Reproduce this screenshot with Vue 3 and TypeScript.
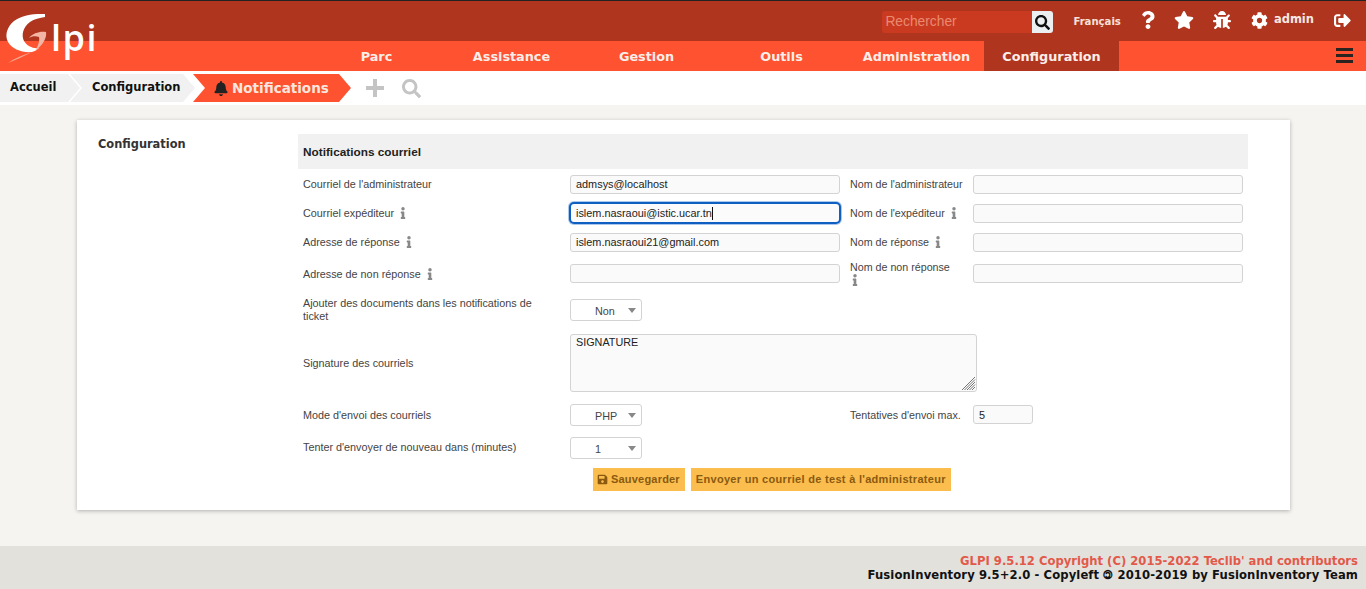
<script setup lang="ts">
const menu = [
  { label: 'Parc' },
  { label: 'Assistance' },
  { label: 'Gestion' },
  { label: 'Outils' },
  { label: 'Administration' },
  { label: 'Configuration', active: true },
]
</script>

<template>
  <div class="page">
    <header class="top">
      <div class="top-right">
        <div class="search">
          <span class="search-input">Rechercher</span>
          <span class="search-btn">
            <svg width="15" height="15" viewBox="0 0 512 512"><path fill="#111" d="M505 442.700L405.300 343c-4.500-4.500-10.600-7-17-7H372c27.600-35.300 44-79.700 44-128C416 93.100 322.900 0 208 0S0 93.100 0 208s93.100 208 208 208c48.300 0 92.700-16.400 128-44v16.300c0 6.400 2.500 12.500 7 17l99.700 99.700c9.400 9.400 24.600 9.400 33.900 0l28.300-28.300c9.400-9.400 9.400-24.600.1-34zM208 336c-70.700 0-128-57.200-128-128 0-70.700 57.200-128 128-128 70.700 0 128 57.200 128 128 0 70.700-57.200 128-128 128z"/></svg>
          </span>
        </div>
        <span class="lang">Français</span>
        <svg class="ico help" width="14" height="18" viewBox="0 0 384 512"><path fill="#fff" d="M202.021 0C122.202 0 70.503 32.703 29.914 91.026c-7.363 10.580-5.093 25.086 5.178 32.874l43.138 32.709c10.373 7.865 25.132 6.026 33.253-4.148 25.049-31.381 43.630-49.449 82.757-49.449 30.764 0 68.816 19.799 68.816 49.631 0 22.552-18.617 34.134-48.993 51.164-35.423 19.860-82.299 44.576-82.299 106.405V320c0 13.255 10.745 24 24 24h72.471c13.255 0 24-10.745 24-24v-5.773c0-42.860 125.268-44.645 125.268-160.627C377.504 66.256 286.902 0 202.021 0zM192 373.459c-38.196 0-69.271 31.075-69.271 69.271 0 38.195 31.075 69.270 69.271 69.270s69.271-31.075 69.271-69.271-31.075-69.270-69.271-69.270z"/></svg>
        <svg class="ico star" width="20" height="18" viewBox="0 0 576 512"><path fill="#fff" d="M259.300 17.800L194 150.200 47.900 171.500c-26.200 3.800-36.700 36.100-17.700 54.600l105.700 103-25 145.500c-4.500 26.300 23.200 46 46.400 33.700L288 439.600l130.700 68.700c23.200 12.200 50.900-7.400 46.400-33.700l-25-145.500 105.700-103c19-18.500 8.500-50.800-17.700-54.600L382 150.200 316.700 17.800c-11.700-23.600-45.600-23.900-57.400 0z"/></svg>
        <svg class="ico bug" width="18" height="18" viewBox="0 0 512 512"><path fill="#fff" d="M511.988 288.900c-.478 17.430-15.217 31.100-32.653 31.100H424v16c0 21.864-4.882 42.584-13.600 61.145l60.228 60.228c12.496 12.497 12.496 32.758 0 45.255-12.498 12.497-32.759 12.496-45.256 0l-54.736-54.736C345.886 467.965 314.351 480 280 480V236c0-6.627-5.373-12-12-12h-24c-6.627 0-12 5.373-12 12v244c-34.351 0-65.886-12.035-90.636-32.108l-54.736 54.736c-12.498 12.497-32.759 12.496-45.256 0-12.496-12.497-12.496-32.758 0-45.255l60.228-60.228C92.882 378.584 88 357.864 88 336v-16H32.666C15.230 320 .491 306.330.013 288.900-.484 270.816 14.028 256 32 256h56v-58.745l-46.628-46.628c-12.496-12.497-12.496-32.758 0-45.255 12.498-12.497 32.758-12.497 45.256 0L141.255 160h229.489l54.627-54.627c12.498-12.497 32.758-12.497 45.256 0 12.496 12.497 12.496 32.758 0 45.255L424 197.255V256h56c17.972 0 32.484 14.816 31.988 32.900zM257 0c-61.856 0-112 50.144-112 112h224C369 50.144 318.856 0 257 0z"/></svg>
        <svg class="ico gear" width="17" height="17" viewBox="0 0 512 512"><path fill="#fff" d="M487.400 315.700l-42.600-24.600c4.300-23.200 4.300-47 0-70.200l42.600-24.600c4.900-2.800 7.100-8.600 5.500-14-11.100-35.600-30-67.800-54.700-94.600-3.800-4.100-10-5.100-14.800-2.300L380.800 110c-17.900-15.400-38.500-27.300-60.800-35.100V25.800c0-5.600-3.900-10.500-9.400-11.700-36.700-8.200-74.300-7.800-109.200 0-5.500 1.200-9.400 6.100-9.400 11.700V75c-22.200 7.900-42.800 19.800-60.800 35.100L88.700 85.500c-4.900-2.800-11-1.900-14.800 2.300-24.700 26.700-43.600 58.900-54.700 94.600-1.700 5.400.6 11.200 5.500 14L67.300 221c-4.300 23.200-4.300 47 0 70.200l-42.600 24.600c-4.900 2.800-7.100 8.600-5.500 14 11.100 35.600 30 67.800 54.700 94.600 3.800 4.100 10 5.100 14.800 2.300l42.600-24.600c17.900 15.400 38.500 27.300 60.800 35.100v49.200c0 5.600 3.900 10.500 9.400 11.700 36.700 8.200 74.300 7.800 109.200 0 5.500-1.200 9.400-6.100 9.400-11.700v-49.200c22.200-7.900 42.800-19.800 60.800-35.100l42.600 24.600c4.900 2.800 11 1.900 14.800-2.300 24.700-26.700 43.600-58.900 54.700-94.600 1.500-5.500-.7-11.300-5.600-14.100zM256 336c-44.100 0-80-35.900-80-80s35.900-80 80-80 80 35.900 80 80-35.900 80-80 80z"/></svg>
        <span class="user">admin</span>
        <svg class="ico out" width="19" height="17" viewBox="0 0 512 512"><path fill="#fff" d="M497 273L329 441c-15 15-41 4.500-41-17v-96H152c-13.300 0-24-10.700-24-24v-96c0-13.300 10.700-24 24-24h136V88c0-21.400 25.900-32 41-17l168 168c9.300 9.400 9.300 24.600 0 34zM192 436v-40c0-6.600-5.400-12-12-12H96c-17.700 0-32-14.300-32-32V160c0-17.700 14.300-32 32-32h84c6.600 0 12-5.400 12-12V76c0-6.600-5.400-12-12-12H96c-53 0-96 43-96 96v192c0 53 43 96 96 96h84c6.600 0 12-5.400 12-12z"/></svg>
      </div>
    </header>

    <nav class="menu">
      <a v-for="m in menu" :key="m.label" class="menu-item" :class="{ active: m.active }">{{ m.label }}</a>
      <span class="burger"><i></i><i></i><i></i></span>
    </nav>

    <div class="logo">
      <svg class="logo-g" width="56" height="65" viewBox="0 0 56 65">
        <path fill="#fff" d="M45 14 C34 13.500 22 15 14 21 C7 27 4.500 35 8 42 C12 49 22 53 32 52 C35 51 37 50 39 48 C33 49 27 46 24 41 C21 35 23 27 30 22 C34 19 40 18 45 17Z" />
        <path fill="#f3b6a4" d="M29 38 C33 33 40 31 46 32 C47 38 43 45 35 51 C38 46 40 41 39 37 C36 36 32 36 29 38Z" />
        <path fill="#f6a78f" d="M8 63 C15 58 23 55 32 52 C24 56 16 60 8 63Z" />
      </svg>
      <span class="logo-text">lpi</span>
    </div>

    <div class="crumbs">
      <span class="crumb first">Accueil</span>
      <span class="crumb second">Configuration</span>
      <span class="crumb current">
        <svg width="14" height="15" viewBox="0 0 448 512"><path fill="#222" d="M224 512c35.320 0 63.970-28.650 63.970-64H160.030c0 35.350 28.650 64 63.970 64zm215.390-149.710c-19.320-20.760-55.470-51.990-55.470-154.290 0-77.700-54.480-139.900-127.940-155.160V32c0-17.670-14.320-32-31.980-32s-31.980 14.330-31.980 32v20.840C118.560 68.100 64.080 130.300 64.080 208c0 102.300-36.150 133.530-55.470 154.290-6 6.450-8.660 14.160-8.610 21.710.11 16.400 12.980 32 32.100 32h383.800c19.120 0 32-15.600 32.100-32 .05-7.550-2.610-15.270-8.610-21.710z"/></svg>
        Notifications
      </span>
      <svg class="act-plus" width="18" height="18" viewBox="0 0 18 18"><path fill="#c4c4c4" d="M7 0h4v7h7v4h-7v7H7v-7H0V7h7z"/></svg>
      <svg class="act-search" width="19" height="19" viewBox="0 0 512 512"><path fill="#c4c4c4" d="M505 442.700L405.300 343c-4.500-4.500-10.600-7-17-7H372c27.600-35.300 44-79.700 44-128C416 93.100 322.900 0 208 0S0 93.100 0 208s93.100 208 208 208c48.300 0 92.700-16.400 128-44v16.300c0 6.400 2.500 12.500 7 17l99.700 99.700c9.400 9.400 24.600 9.400 33.900 0l28.300-28.300c9.400-9.400 9.400-24.600.1-34zM208 336c-70.700 0-128-57.200-128-128 0-70.700 57.200-128 128-128 70.700 0 128 57.200 128 128 0 70.700-57.200 128-128 128z"/></svg>
    </div>

    <main class="body">
      <section class="card">
        <div class="tab">Configuration</div>
        <div class="panel">
          <div class="panel-head">Notifications courriel</div>
          <div class="form">
            <label>Courriel de l'administrateur</label>
            <div class="field"><input value="admsys@localhost" /></div>
            <label class="l2">Nom de l'administrateur</label>
            <div class="field"><input /></div>

            <label>Courriel expéditeur <svg class="info" width="6" height="12" viewBox="0 0 192 512"><path d="M20 424.229h20V279.771H20c-11.046 0-20-8.954-20-20V212c0-11.046 8.954-20 20-20h112c11.046 0 20 8.954 20 20v212.229h20c11.046 0 20 8.954 20 20V492c0 11.046-8.954 20-20 20H20c-11.046 0-20-8.954-20-20v-47.771c0-11.046 8.954-20 20-20zM96 0C56.235 0 24 32.235 24 72s32.235 72 72 72 72-32.235 72-72S135.764 0 96 0z"/></svg></label>
            <div class="field"><div class="input-focus">islem.nasraoui@istic.ucar.tn<b class="caret"></b></div></div>
            <label class="l2">Nom de l'expéditeur <svg class="info" width="6" height="12" viewBox="0 0 192 512"><path d="M20 424.229h20V279.771H20c-11.046 0-20-8.954-20-20V212c0-11.046 8.954-20 20-20h112c11.046 0 20 8.954 20 20v212.229h20c11.046 0 20 8.954 20 20V492c0 11.046-8.954 20-20 20H20c-11.046 0-20-8.954-20-20v-47.771c0-11.046 8.954-20 20-20zM96 0C56.235 0 24 32.235 24 72s32.235 72 72 72 72-32.235 72-72S135.764 0 96 0z"/></svg></label>
            <div class="field"><input /></div>

            <label>Adresse de réponse <svg class="info" width="6" height="12" viewBox="0 0 192 512"><path d="M20 424.229h20V279.771H20c-11.046 0-20-8.954-20-20V212c0-11.046 8.954-20 20-20h112c11.046 0 20 8.954 20 20v212.229h20c11.046 0 20 8.954 20 20V492c0 11.046-8.954 20-20 20H20c-11.046 0-20-8.954-20-20v-47.771c0-11.046 8.954-20 20-20zM96 0C56.235 0 24 32.235 24 72s32.235 72 72 72 72-32.235 72-72S135.764 0 96 0z"/></svg></label>
            <div class="field"><input value="islem.nasraoui21@gmail.com" /></div>
            <label class="l2">Nom de réponse <svg class="info" width="6" height="12" viewBox="0 0 192 512"><path d="M20 424.229h20V279.771H20c-11.046 0-20-8.954-20-20V212c0-11.046 8.954-20 20-20h112c11.046 0 20 8.954 20 20v212.229h20c11.046 0 20 8.954 20 20V492c0 11.046-8.954 20-20 20H20c-11.046 0-20-8.954-20-20v-47.771c0-11.046 8.954-20 20-20zM96 0C56.235 0 24 32.235 24 72s32.235 72 72 72 72-32.235 72-72S135.764 0 96 0z"/></svg></label>
            <div class="field"><input /></div>

            <label>Adresse de non réponse <svg class="info" width="6" height="12" viewBox="0 0 192 512"><path d="M20 424.229h20V279.771H20c-11.046 0-20-8.954-20-20V212c0-11.046 8.954-20 20-20h112c11.046 0 20 8.954 20 20v212.229h20c11.046 0 20 8.954 20 20V492c0 11.046-8.954 20-20 20H20c-11.046 0-20-8.954-20-20v-47.771c0-11.046 8.954-20 20-20zM96 0C56.235 0 24 32.235 24 72s32.235 72 72 72 72-32.235 72-72S135.764 0 96 0z"/></svg></label>
            <div class="field"><input /></div>
            <label class="l2">Nom de non réponse<br /><svg class="info solo" width="6" height="12" viewBox="0 0 192 512"><path d="M20 424.229h20V279.771H20c-11.046 0-20-8.954-20-20V212c0-11.046 8.954-20 20-20h112c11.046 0 20 8.954 20 20v212.229h20c11.046 0 20 8.954 20 20V492c0 11.046-8.954 20-20 20H20c-11.046 0-20-8.954-20-20v-47.771c0-11.046 8.954-20 20-20zM96 0C56.235 0 24 32.235 24 72s32.235 72 72 72 72-32.235 72-72S135.764 0 96 0z"/></svg></label>
            <div class="field"><input /></div>

            <label>Ajouter des documents dans les notifications de ticket</label>
            <div class="field wide"><div class="select">Non</div></div>

            <label>Signature des courriels</label>
            <div class="field wide"><div class="textarea">SIGNATURE
              <svg class="grip" width="15" height="15" viewBox="0 0 15 15"><path stroke="#777" fill="none" d="M14 1 1 14M14 3.500 3.500 14M14 6l-8 8M14 8.500 8.500 14M14 11l-3 3" /></svg>
            </div></div>

            <label>Mode d'envoi des courriels</label>
            <div class="field"><div class="select">PHP</div></div>
            <label class="l2">Tentatives d'envoi max.</label>
            <div class="field"><input class="small" value="5" /></div>

            <label>Tenter d'envoyer de nouveau dans (minutes)</label>
            <div class="field wide"><div class="select">1</div></div>

            <div class="buttons">
              <button type="button" class="save">
                <svg width="11" height="11" viewBox="0 0 448 512"><path fill="#8a5a10" d="M433.900 129.900l-83.900-83.900A48 48 0 0 0 316.100 32H48C21.490 32 0 53.490 0 80v352c0 26.510 21.490 48 48 48h352c26.510 0 48-21.490 48-48V163.900a48 48 0 0 0-14.100-34zM224 416c-35.350 0-64-28.650-64-64 0-35.350 28.650-64 64-64s64 28.650 64 64c0 35.350-28.650 64-64 64zm96-304.500V212c0 6.630-5.370 12-12 12H76c-6.630 0-12-5.370-12-12V108c0-6.630 5.370-12 12-12h228.500c3.180 0 6.230 1.260 8.490 3.510l3.500 3.500A12 12 0 0 1 320 111.500z"/></svg>
                Sauvegarder
              </button>
              <button type="button">Envoyer un courriel de test à l'administrateur</button>
            </div>
          </div>
        </div>
      </section>
    </main>

    <footer class="foot">
      <div class="foot-a">GLPI 9.5.12 Copyright (C) 2015-2022 Teclib' and contributors</div>
      <div class="foot-b">FusionInventory 9.5+2.0 - Copyleft 🄯 2010-2019 by FusionInventory Team</div>
    </footer>
  </div>
</template>

<style>
html, body { margin: 0; background: #f6f4f1; }
</style>

<style scoped>
.page {
  height: 589px;
  display: flex;
  flex-direction: column;
  overflow: hidden;
  font-family: "DejaVu Sans", Verdana, sans-serif;
  position: relative;
}
.top {
  height: 40px;
  flex: none;
  border-top: 1px solid #222;
  background: #af351f;
  display: flex;
  justify-content: flex-end;
}
.logo {
  position: absolute;
  left: 0;
  top: 0;
  width: 100px;
  height: 65px;
}
.logo-g { position: absolute; left: 0; top: 0; }
.logo-text {
  position: absolute;
  left: 51px;
  top: 14px;
  font: 600 36px/48px "Open Sans", sans-serif;
  color: #fff;
  letter-spacing: 1.500px;
}
.top-right {
  display: flex;
  align-items: center;
  height: 38px;
  padding-right: 14px;
}
.search { display: flex; width: 171px; height: 22px; margin: 4px 20px 0 0; }
.search-input {
  width: 150px;
  background: #c93a21;
  color: #e98a70;
  font: 13.800px/22px "Liberation Sans", sans-serif;
  padding-left: 3px;
  box-sizing: border-box;
  border-radius: 3px 0 0 3px;
}
.search-btn {
  width: 21px;
  background: #eceff1;
  border-radius: 0 3px 3px 0;
  display: flex;
  align-items: center;
  justify-content: center;
}
.lang { font-size: 10.100px; font-weight: 700; color: #f7e0d8; margin: 3px 20px 0 0; }
.ico { flex: none; }
.help { margin-right: 19px; }
.star { margin-right: 19px; }
.bug { margin-right: 20px; }
.user { font-size: 11.500px; font-weight: 700; color: #f7e8e2; margin: -3px 19px 0 6px; }
.menu {
  height: 30px;
  flex: none;
  background: #fe5230;
  display: flex;
  padding-left: 309px;
  position: relative;
}
.menu-item {
  width: 135px;
  font-size: 12.800px;
  font-weight: 700;
  color: #fbeee8;
  line-height: 31px;
  text-align: center;
  flex: none;
}
.menu-item.active { background: #af351f; }
.burger {
  position: absolute;
  right: 13px;
  top: 7px;
  width: 17px;
  height: 15px;
  display: flex;
  flex-direction: column;
  justify-content: space-between;
}
.burger i { display: block; height: 3px; background: #2a2320; }
.crumbs {
  height: 34px;
  background: #fff;
  display: flex;
  align-items: center;
  flex: none;
}
.crumb {
  height: 28px;
  line-height: 27px;
  font-size: 11.500px;
  font-weight: 700;
  color: #111;
  background: #f1f1f1;
  display: block;
  box-sizing: border-box;
  clip-path: polygon(0 0, calc(100% - 12px) 0, 100% 50%, calc(100% - 12px) 100%, 0 100%, 12px 50%);
}
.crumb.first { width: 80px; padding-left: 10px; clip-path: polygon(0 0, calc(100% - 12px) 0, 100% 50%, calc(100% - 12px) 100%, 0 100%); }
.crumb.second { width: 125px; margin-left: -10px; padding-left: 22px; }
.crumb.current {
  width: 158px;
  margin-left: -2px;
  padding-left: 21px;
  background: #fe5230;
  color: #fbe6de;
  font-size: 13.500px;
  display: flex;
  align-items: center;
  gap: 4px;
}
.act-plus { margin-left: 15px; }
.act-search { margin-left: 18px; }
.body { flex: 1; padding: 15px 76px 0 77px; background: #f6f4f1; }
.card {
  height: 390px;
  background: #fff;
  box-shadow: 0 1px 4px rgba(0, 0, 0, 0.28);
  display: flex;
  padding-top: 14px;
  box-sizing: border-box;
}
.tab {
  width: 221px;
  padding-left: 21px;
  box-sizing: border-box;
  font-size: 11.400px;
  font-weight: 700;
  color: #333;
  line-height: 21px;
}
.panel { width: 950px; }
.panel-head {
  height: 35px;
  background: #f1f1f1;
  padding-left: 5px;
  font: 700 11.800px/36px "Liberation Sans", sans-serif;
  color: #222;
}
.form {
  display: grid;
  grid-template-columns: 267px 280px 123px 275px;
  grid-template-rows: 29px 29px 29px 34px 38px 68px 36px 29px 34px;
  padding: 1px 0 0 5px;
  font: 10.800px/13px "Liberation Sans", sans-serif;
  color: #444;
}
.form label { align-self: center; padding-right: 30px; }
.form label.l2 { padding-right: 0; font-size: 10.700px; }
.field { display: flex; align-items: center; }
.wide { grid-column: 2 / span 3; }
.field input, .input-focus {
  width: 270px;
  height: 19px;
  margin-top: -1px;
  box-sizing: border-box;
  background: #fafafa;
  border: 1px solid #d3d3d3;
  border-radius: 3px;
  padding: 0 5px;
  font: 10.900px "Liberation Sans", sans-serif;
  color: #222;
  outline: none;
}
.field input.small { width: 60px; }
.input-focus {
  width: 272px;
  height: 22px;
  margin: -1px 0 0 -1px;
  border: 2px solid #0f5fc2;
  border-radius: 5px;
  box-shadow: 0 0 0 1px rgba(15, 95, 194, 0.35);
  line-height: 18px;
  background: #fbfbfb;
}
.caret { display: inline-block; width: 1px; height: 13px; background: #111; vertical-align: -3px; }
.info { fill: #888; margin-left: 3px; vertical-align: -2px; }
.info.solo { margin-left: 2px; }
.select {
  width: 72px;
  height: 22px;
  box-sizing: border-box;
  background: #fff;
  border: 1px solid #d3d3d3;
  border-radius: 3px;
  padding-left: 24px;
  line-height: 22px;
  position: relative;
}
.select::after {
  content: "";
  position: absolute;
  right: 5px;
  top: 8px;
  border: 4.500px solid transparent;
  border-top: 5px solid #888;
  border-bottom: 0;
}
.textarea {
  width: 407px;
  height: 58px;
  box-sizing: border-box;
  background: #fafafa;
  border: 1px solid #d3d3d3;
  border-radius: 3px;
  padding: 1px 5px;
  color: #222;
  position: relative;
}
.grip { position: absolute; right: 0; bottom: 0; }
.buttons {
  grid-column: 1 / -1;
  display: flex;
  align-items: center;
  gap: 6px;
  padding-left: 290px;
}
button {
  height: 23px;
  border: 0;
  background: #fbbd4e;
  color: #8a5a10;
  font: 700 11px "Liberation Sans", sans-serif;
  letter-spacing: 0.3px;
  padding: 0 5px;
  display: flex;
  align-items: center;
  gap: 3px;
}
button.save { letter-spacing: 0.2px; padding-left: 4px; }
.foot {
  height: 43px;
  flex: none;
  background: #e2e1dc;
  text-align: right;
  padding: 8px 8px 0 0;
  box-sizing: border-box;
  font-size: 11.600px;
  font-weight: 700;
  line-height: 14px;
}
.foot-a { color: #e2594a; }
.foot-b { color: #111; letter-spacing: 0.1px; }
</style>
